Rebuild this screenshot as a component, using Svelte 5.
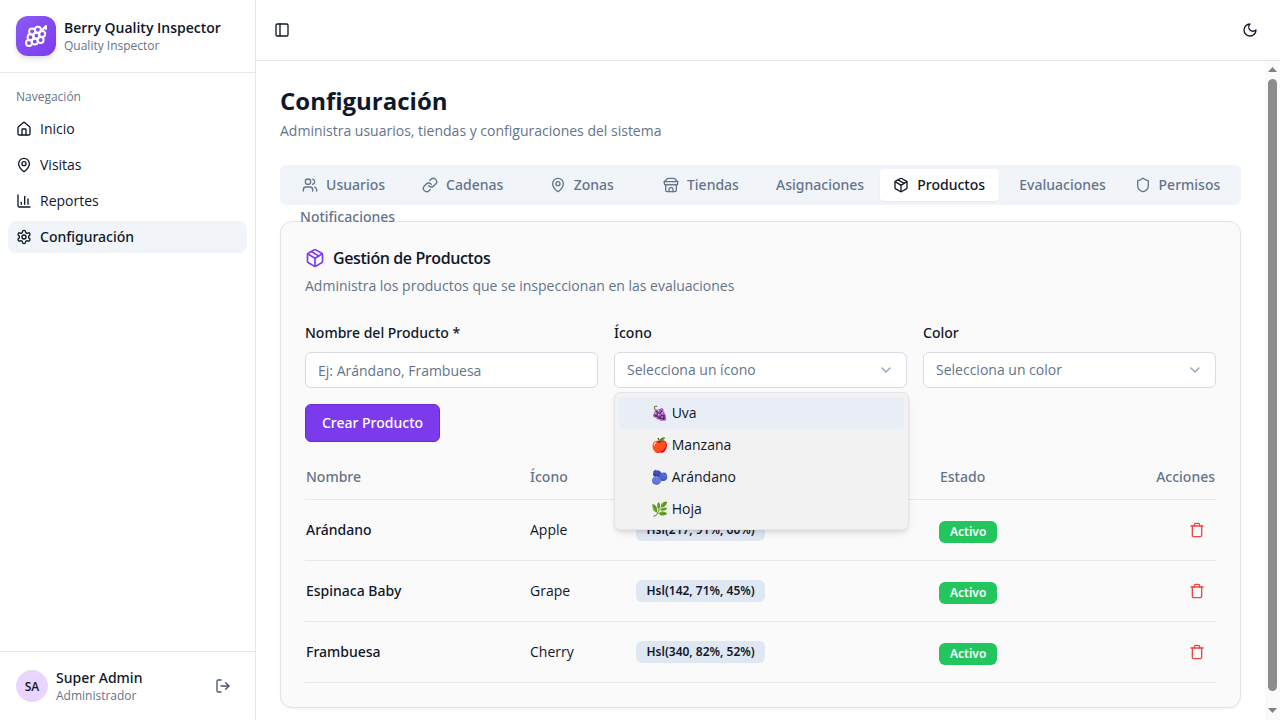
<script>
  const icons = {
    home: '<path d="M15 21v-8a1 1 0 0 0-1-1h-4a1 1 0 0 0-1 1v8"/><path d="M3 10a2 2 0 0 1 .709-1.528l7-5.999a2 2 0 0 1 2.582 0l7 5.999A2 2 0 0 1 21 10v9a2 2 0 0 1-2 2H5a2 2 0 0 1-2-2z"/>',
    pin: '<path d="M20 10c0 4.993-5.539 10.193-7.399 11.799a1 1 0 0 1-1.202 0C9.539 20.193 4 14.993 4 10a8 8 0 0 1 16 0"/><circle cx="12" cy="10" r="3"/>',
    chart: '<path d="M3 3v16a2 2 0 0 0 2 2h16"/><path d="M18 17V9"/><path d="M13 17V5"/><path d="M8 17v-3"/>',
    settings: '<path d="M12.22 2h-.44a2 2 0 0 0-2 2v.18a2 2 0 0 1-1 1.73l-.43.25a2 2 0 0 1-2 0l-.15-.08a2 2 0 0 0-2.73.73l-.22.38a2 2 0 0 0 .73 2.73l.15.1a2 2 0 0 1 1 1.72v.51a2 2 0 0 1-1 1.74l-.15.09a2 2 0 0 0-.73 2.73l.22.38a2 2 0 0 0 2.73.73l.15-.08a2 2 0 0 1 2 0l.43.25a2 2 0 0 1 1 1.73V20a2 2 0 0 0 2 2h.44a2 2 0 0 0 2-2v-.18a2 2 0 0 1 1-1.73l.43-.25a2 2 0 0 1 2 0l.15.08a2 2 0 0 0 2.73-.73l.22-.39a2 2 0 0 0-.73-2.73l-.15-.08a2 2 0 0 1-1-1.74v-.5a2 2 0 0 1 1-1.74l.15-.09a2 2 0 0 0 .73-2.73l-.22-.38a2 2 0 0 0-2.73-.73l-.15.08a2 2 0 0 1-2 0l-.43-.25a2 2 0 0 1-1-1.73V4a2 2 0 0 0-2-2z"/><circle cx="12" cy="12" r="3"/>',
    users: '<path d="M16 21v-2a4 4 0 0 0-4-4H6a4 4 0 0 0-4 4v2"/><circle cx="9" cy="7" r="4"/><path d="M22 21v-2a4 4 0 0 0-3-3.87"/><path d="M16 3.13a4 4 0 0 1 0 7.75"/>',
    link: '<path d="M10 13a5 5 0 0 0 7.54.54l3-3a5 5 0 0 0-7.07-7.07l-1.72 1.71"/><path d="M14 11a5 5 0 0 0-7.54-.54l-3 3a5 5 0 0 0 7.07 7.07l1.71-1.71"/>',
    store: '<path d="m2 7 4.41-4.41A2 2 0 0 1 7.83 2h8.34a2 2 0 0 1 1.42.59L22 7"/><path d="M4 12v8a2 2 0 0 0 2 2h12a2 2 0 0 0 2-2v-8"/><path d="M15 22v-4a2 2 0 0 0-2-2h-2a2 2 0 0 0-2 2v4"/><path d="M2 7h20"/><path d="M22 7v3a2 2 0 0 1-2 2a2.7 2.7 0 0 1-1.59-.63.7.7 0 0 0-.82 0A2.7 2.7 0 0 1 16 12a2.7 2.7 0 0 1-1.59-.63.7.7 0 0 0-.82 0A2.7 2.7 0 0 1 12 12a2.7 2.7 0 0 1-1.59-.63.7.7 0 0 0-.82 0A2.7 2.7 0 0 1 8 12a2.7 2.7 0 0 1-1.59-.63.7.7 0 0 0-.82 0A2.7 2.7 0 0 1 4 12a2 2 0 0 1-2-2V7"/>',
    box: '<path d="M11 21.73a2 2 0 0 0 2 0l7-4A2 2 0 0 0 21 16V8a2 2 0 0 0-1-1.73l-7-4a2 2 0 0 0-2 0l-7 4A2 2 0 0 0 3 8v8a2 2 0 0 0 1 1.73z"/><path d="M12 22V12"/><path d="m3.3 7 7.703 4.734a2 2 0 0 0 1.994 0L20.7 7"/><path d="m7.5 4.27 9 5.15"/>',
    shield: '<path d="M20 13c0 5-3.5 7.5-7.66 8.95a1 1 0 0 1-.67-.01C7.5 20.5 4 18 4 13V6a1 1 0 0 1 1-1c2 0 4.5-1.2 6.24-2.72a1.17 1.17 0 0 1 1.52 0C14.51 3.81 17 5 19 5a1 1 0 0 1 1 1z"/>',
    clipboard: '<rect width="8" height="4" x="8" y="2" rx="1"/><path d="M16 4h2a2 2 0 0 1 2 2v14a2 2 0 0 1-2 2H6a2 2 0 0 1-2-2V6a2 2 0 0 1 2-2h2"/>',
    bell: '<path d="M6 8a6 6 0 0 1 12 0c0 7 3 9 3 9H3s3-2 3-9"/><path d="M10.3 21a1.94 1.94 0 0 0 3.4 0"/>',
    logout: '<path d="m16 17 5-5-5-5"/><path d="M21 12H9"/><path d="M9 21H5a2 2 0 0 1-2-2V5a2 2 0 0 1 2-2h4"/>',
    panel: '<rect width="18" height="18" x="3" y="3" rx="2"/><path d="M9 3v18"/>',
    moon: '<path d="M12 3a6 6 0 0 0 9 9 9 9 0 1 1-9-9Z"/>',
    trash: '<path d="M3 6h18"/><path d="M19 6v14c0 1-1 2-2 2H7c-1 0-2-1-2-2V6"/><path d="M8 6V4c0-1 1-2 2-2h4c1 0 2 1 2 2v2"/>',
    chevron: '<path d="m6 9 6 6 6-6"/>',
    grape: '<path d="M22 5V2l-5.89 5.89"/><circle cx="16.6" cy="15.89" r="3"/><circle cx="8.11" cy="7.4" r="3"/><circle cx="12.35" cy="11.65" r="3"/><circle cx="13.91" cy="5.85" r="3"/><circle cx="18.15" cy="10.09" r="3"/><circle cx="6.56" cy="13.2" r="3"/><circle cx="10.8" cy="17.44" r="3"/><circle cx="5" cy="19" r="3"/>'
  }

  const nav = [
    { label: 'Inicio', icon: 'home' },
    { label: 'Visitas', icon: 'pin' },
    { label: 'Reportes', icon: 'chart' },
    { label: 'Configuración', icon: 'settings', active: true }
  ]

  const tabs = [
    { label: 'Usuarios', icon: 'users' },
    { label: 'Cadenas', icon: 'link' },
    { label: 'Zonas', icon: 'pin' },
    { label: 'Tiendas', icon: 'store' },
    { label: 'Asignaciones' },
    { label: 'Productos', icon: 'box', active: true },
    { label: 'Evaluaciones', icon: 'clipboard' },
    { label: 'Permisos', icon: 'shield' },
    { label: 'Notificaciones', icon: 'bell' }
  ]

  const products = [
    { name: 'Arándano', icon: 'Apple', color: 'Hsl(217, 91%, 60%)' },
    { name: 'Espinaca Baby', icon: 'Grape', color: 'Hsl(142, 71%, 45%)' },
    { name: 'Frambuesa', icon: 'Cherry', color: 'Hsl(340, 82%, 52%)' }
  ]

  const options = [
    { emoji: '🍇', label: 'Uva', active: true },
    { emoji: '🍎', label: 'Manzana' },
    { emoji: '🫐', label: 'Arándano' },
    { emoji: '🌿', label: 'Hoja' }
  ]
</script>

{#snippet icon(name, cls = '')}
  <svg class={cls} viewBox="0 0 24 24" fill="none" stroke="currentColor" stroke-width="2" stroke-linecap="round" stroke-linejoin="round">{@html icons[name]}</svg>
{/snippet}

<div class="app">
  <aside class="sidebar">
    <div class="brand">
      <div class="logo">{@render icon('grape')}</div>
      <div class="brand-text">
        <div class="brand-name">Berry Quality Inspector</div>
        <div class="brand-sub">Quality Inspector</div>
      </div>
    </div>

    <nav class="nav">
      <div class="nav-label">Navegación</div>
      {#each nav as item}
        <a class="nav-item" class:active={item.active} href="#top">
          {@render icon(item.icon)}
          <span>{item.label}</span>
        </a>
      {/each}
    </nav>

    <div class="user">
      <div class="avatar">SA</div>
      <div class="user-text">
        <div class="user-name">Super Admin</div>
        <div class="user-role">Administrador</div>
      </div>
      <button class="logout" aria-label="Salir">{@render icon('logout')}</button>
    </div>
  </aside>

  <div class="main">
    <header class="topbar">
      <button class="ghost" aria-label="Menú">{@render icon('panel')}</button>
      <button class="ghost" aria-label="Tema">{@render icon('moon')}</button>
    </header>

    <div class="body">
      <main class="content">
        <h1>Configuración</h1>
        <p class="subtitle">Administra usuarios, tiendas y configuraciones del sistema</p>

        <div class="tabs">
          {#each tabs as tab}
            <button class="tab" class:active={tab.active}>
              {#if tab.icon}{@render icon(tab.icon)}{/if}
              <span>{tab.label}</span>
            </button>
          {/each}
        </div>

        <section class="card">
          <h2>{@render icon('box')}Gestión de Productos</h2>
          <p class="card-desc">Administra los productos que se inspeccionan en las evaluaciones</p>

          <div class="form">
            <div class="field">
              <span class="label">Nombre del Producto *</span>
              <input class="input" placeholder="Ej: Arándano, Frambuesa" />
            </div>
            <div class="field select-field">
              <span class="label">Ícono</span>
              <div class="select"><span>Selecciona un ícono</span>{@render icon('chevron')}</div>
              <div class="popup">
                {#each options as opt}
                  <div class="option" class:active={opt.active}>
                    <span>{opt.emoji}</span> {opt.label}
                  </div>
                {/each}
              </div>
            </div>
            <div class="field">
              <span class="label">Color</span>
              <div class="select"><span>Selecciona un color</span>{@render icon('chevron')}</div>
            </div>
          </div>

          <button class="primary">Crear Producto</button>

          <table>
            <colgroup>
              <col style="width: 224px" />
              <col style="width: 106px" />
              <col style="width: 304px" />
              <col />
              <col style="width: 100px" />
            </colgroup>
            <thead>
              <tr>
                <th>Nombre</th>
                <th>Ícono</th>
                <th>Color</th>
                <th>Estado</th>
                <th class="right">Acciones</th>
              </tr>
            </thead>
            <tbody>
              {#each products as p}
                <tr>
                  <td class="name">{p.name}</td>
                  <td>{p.icon}</td>
                  <td><span class="pill">{p.color}</span></td>
                  <td><span class="badge">Activo</span></td>
                  <td class="right"><button class="delete" aria-label="Eliminar">{@render icon('trash')}</button></td>
                </tr>
              {/each}
            </tbody>
          </table>
        </section>
      </main>

      <div class="scrollbar" aria-hidden="true">
        <svg class="arrow" viewBox="0 0 9 5"><path d="M4.5 0 9 5H0z" /></svg>
        <div class="thumb"></div>
        <svg class="arrow" viewBox="0 0 9 5"><path d="M4.5 5 9 0H0z" /></svg>
      </div>
    </div>
  </div>
</div>

<style>
  :global(body) {
    margin: 0;
    font-family: "Open Sans", "Noto Sans", sans-serif;
    color: #0f172a;
    background: #fff;
  }

  svg {
    width: 16px;
    height: 16px;
    min-width: 0;
  }

  button {
    font: inherit;
    color: inherit;
    background: none;
    border: none;
    padding: 0;
  }

  .app {
    display: flex;
    height: 720px;
    overflow: hidden;
  }

  .sidebar {
    width: 255px;
    flex: none;
    display: flex;
    flex-direction: column;
    border-right: 1px solid #e5e7eb;
  }

  .brand {
    height: 73px;
    box-sizing: border-box;
    border-bottom: 1px solid #e5e7eb;
    display: flex;
    align-items: center;
    gap: 8px;
    padding: 0 16px;
  }

  .logo {
    width: 40px;
    height: 40px;
    border-radius: 12px;
    background: linear-gradient(135deg, #8b5cf6, #7c3aed);
    box-shadow: 0 4px 6px -1px rgba(0, 0, 0, 0.1), 0 2px 4px -2px rgba(0, 0, 0, 0.1);
    display: flex;
    align-items: center;
    justify-content: center;
    color: #fff;
  }

  .logo svg {
    width: 24px;
    height: 24px;
  }

  .brand-name {
    font-size: 14px;
    line-height: 20px;
    font-weight: 600;
  }

  .brand-sub {
    font-size: 12px;
    line-height: 16px;
    color: #64748b;
  }

  .nav {
    flex: 1;
    padding: 8px;
    display: flex;
    flex-direction: column;
    gap: 4px;
  }

  .nav-label {
    height: 32px;
    margin-bottom: -4px;
    padding: 0 8px;
    font-size: 12px;
    line-height: 32px;
    color: #64748b;
  }

  .nav-item {
    height: 32px;
    display: flex;
    align-items: center;
    gap: 8px;
    padding: 0 8px;
    border-radius: 8px;
    font-size: 14px;
    line-height: 20px;
    color: inherit;
    text-decoration: none;
  }

  .nav-item.active {
    background: #f1f5f9;
    font-family: "Noto Sans", sans-serif;
    font-weight: 500;
  }

  .user {
    height: 69px;
    box-sizing: border-box;
    border-top: 1px solid #e5e7eb;
    display: flex;
    align-items: center;
    gap: 8px;
    padding: 0 16px;
  }

  .avatar {
    width: 32px;
    height: 32px;
    border-radius: 50%;
    background: #e9d5ff;
    font-size: 12px;
    font-weight: 600;
    display: flex;
    align-items: center;
    justify-content: center;
  }

  .user-text {
    flex: 1;
  }

  .user-name {
    font-family: "Noto Sans", sans-serif;
    font-size: 14px;
    line-height: 20px;
    font-weight: 500;
  }

  .user-role {
    font-size: 12px;
    line-height: 16px;
    color: #64748b;
  }

  .logout {
    width: 32px;
    height: 32px;
    display: flex;
    align-items: center;
    justify-content: center;
    color: #475569;
  }

  .main {
    flex: 1;
    min-width: 0;
    display: flex;
    flex-direction: column;
  }

  .topbar {
    height: 61px;
    flex: none;
    box-sizing: border-box;
    border-bottom: 1px solid #e5e7eb;
    display: flex;
    align-items: center;
    justify-content: space-between;
    padding: 0 16px 1px 12px;
  }

  .ghost {
    width: 28px;
    height: 28px;
    display: flex;
    align-items: center;
    justify-content: center;
  }

  .body {
    flex: 1;
    min-height: 0;
    display: flex;
  }

  .content {
    flex: 1;
    min-width: 0;
    overflow: hidden;
    padding: 24px;
  }

  .scrollbar {
    width: 15px;
    flex: none;
    box-sizing: border-box;
    padding: 6px 0 7px 3px;
    background: #fafafa;
    display: flex;
    flex-direction: column;
  }

  .arrow {
    width: 9px;
    height: 5px;
    flex: none;
    fill: #808080;
  }

  .thumb {
    flex: 1;
    width: 9px;
    margin: 7px 0 17px;
    border-radius: 5px;
    background: #8c8c8c;
  }

  h1 {
    margin: 0 0 4px;
    font-size: 24px;
    line-height: 32px;
    font-weight: 700;
  }

  .subtitle {
    margin: 0 0 24px;
    font-size: 14px;
    line-height: 20px;
    color: #64748b;
  }

  .tabs {
    height: 40px;
    box-sizing: border-box;
    padding: 4px;
    margin-bottom: 16px;
    border-radius: 6px;
    background: #f1f5f9;
    display: grid;
    grid-template-columns: repeat(8, 1fr);
  }

  .tab {
    height: 32px;
    box-sizing: border-box;
    min-width: 0;
    padding: 6px 12px;
    display: flex;
    align-items: center;
    justify-content: center;
    gap: 8px;
    border-radius: 4px;
    font-family: "Noto Sans", sans-serif;
    font-size: 14px;
    line-height: 20px;
    font-weight: 500;
    white-space: nowrap;
    color: #64748b;
  }

  .tab.active {
    background: #fff;
    color: #0f172a;
    box-shadow: 0 1px 2px rgba(0, 0, 0, 0.05);
  }

  .card {
    height: 487px;
    box-sizing: border-box;
    padding: 24px;
    border: 1px solid #e2e2e8;
    border-radius: 12px;
    background: #fafafa;
    box-shadow: 0 1px 2px rgba(0, 0, 0, 0.05);
  }

  h2 {
    margin: 0 0 6px;
    display: flex;
    align-items: center;
    gap: 8px;
    font-size: 16px;
    line-height: 24px;
    font-weight: 600;
    letter-spacing: -0.4px;
  }

  h2 svg {
    width: 20px;
    height: 20px;
    color: #7c3aed;
  }

  .card-desc {
    margin: 0 0 27px;
    font-size: 14px;
    line-height: 20px;
    color: #64748b;
  }

  .form {
    display: grid;
    grid-template-columns: repeat(3, 1fr);
    gap: 16px;
    margin-bottom: 16px;
  }

  .field {
    display: flex;
    flex-direction: column;
    gap: 9px;
    position: relative;
    min-width: 0;
  }

  .label {
    font-family: "Noto Sans", sans-serif;
    font-size: 14px;
    line-height: 20px;
    font-weight: 500;
  }

  .input,
  .select {
    height: 36px;
    box-sizing: border-box;
    width: 100%;
    padding: 0 12px;
    border: 1px solid #d9d9e3;
    border-radius: 6px;
    background: #fff;
    font: inherit;
    font-size: 14px;
    line-height: 20px;
    color: #64748b;
    outline: none;
  }

  .input::placeholder {
    color: #64748b;
  }

  .select {
    display: flex;
    align-items: center;
    justify-content: space-between;
  }

  .select svg {
    color: #94a3b8;
  }

  .popup {
    position: absolute;
    left: 0;
    right: -2px;
    top: 69px;
    padding: 4px;
    box-sizing: border-box;
    z-index: 5;
    border: 1px solid #e5e5e9;
    border-radius: 6px;
    background: #f2f2f2;
    box-shadow: 0 4px 6px -1px rgba(0, 0, 0, 0.1), 0 2px 4px -2px rgba(0, 0, 0, 0.1);
  }

  .option {
    height: 32px;
    padding: 6px 0 6px 32px;
    box-sizing: border-box;
    border-radius: 4px;
    font-size: 14px;
    line-height: 20px;
    color: #0f172a;
  }

  .option.active {
    background: #e9eef6;
  }

  .primary {
    display: flex;
    align-items: center;
    justify-content: center;
    height: 38px;
    width: 135px;
    border-radius: 6px;
    border: 1px solid #6d28d9;
    background: #7c3aed;
    color: #fff;
    font-family: "Noto Sans", sans-serif;
    font-size: 14px;
    line-height: 20px;
    font-weight: 500;
  }

  table {
    width: 100%;
    margin-top: 10px;
    border-collapse: collapse;
    table-layout: fixed;
    font-size: 14px;
    line-height: 20px;
  }

  th {
    height: 44px;
    padding: 3px 1px 0;
    text-align: left;
    font-family: "Noto Sans", sans-serif;
    font-weight: 500;
    color: #64748b;
    border-bottom: 1px solid #e5e7eb;
  }

  td {
    height: 60px;
    padding: 0 1px;
    border-bottom: 1px solid #e5e7eb;
  }

  .name {
    font-family: "Noto Sans", sans-serif;
    font-weight: 500;
  }

  .right {
    text-align: right;
  }

  .pill {
    display: inline-block;
    padding: 0 10.5px;
    height: 22px;
    border-radius: 6px;
    background: #dfe7f2;
    font-family: "Noto Sans", sans-serif;
    font-size: 12px;
    line-height: 21px;
    font-weight: 600;
  }

  .badge {
    display: inline-block;
    margin: 3px 0 0 -1px;
    padding: 0 11px;
    height: 22px;
    border-radius: 6px;
    background: #22c55e;
    color: #fff;
    font-family: "Noto Sans", sans-serif;
    font-size: 12px;
    line-height: 22px;
    font-weight: 600;
    vertical-align: middle;
  }

  .delete {
    width: 36px;
    height: 36px;
    display: inline-flex;
    align-items: center;
    justify-content: center;
    color: #ef4444;
    vertical-align: middle;
  }
</style>
